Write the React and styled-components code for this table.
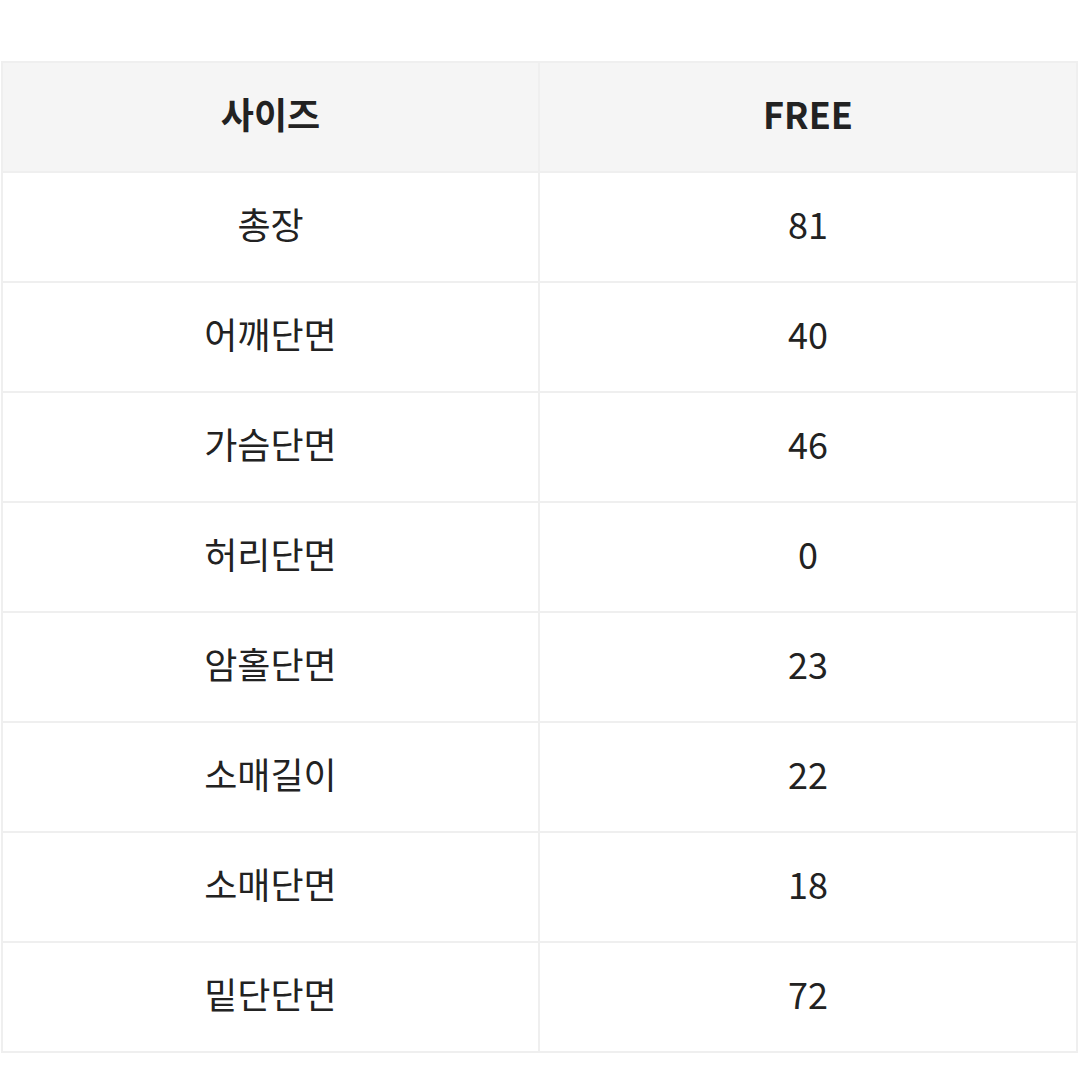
import React from "react";
import styled, { createGlobalStyle } from "styled-components";

const Global = createGlobalStyle`
  html, body { margin: 0; padding: 0; background: #fff; }
  body { font-family: "Noto Sans CJK KR", "Noto Sans", sans-serif; color: #222; }
`;

const Page = styled.div`
  width: 1079px;
  height: 1079px;
  padding-top: 61px;
  padding-left: 1px;
  box-sizing: border-box;
`;

const Table = styled.table`
  width: 1077px;
  border-collapse: collapse;
  table-layout: fixed;
  border: 2px solid #efefef;
`;

const Cell = styled.td`
  height: 110px;
  box-sizing: border-box;
  border: 2px solid #efefef;
  text-align: center;
  vertical-align: middle;
  font-size: 36px;
  line-height: 1.2;
  font-weight: ${(p) => (p.$head ? 700 : 400)};
  background: ${(p) => (p.$head ? "#f5f5f5" : "#fff")};
  color: #222;
  padding: 0 0 6px 0;
`;

const rows = [
  ["총장", "81"],
  ["어깨단면", "40"],
  ["가슴단면", "46"],
  ["허리단면", "0"],
  ["암홀단면", "23"],
  ["소매길이", "22"],
  ["소매단면", "18"],
  ["밑단단면", "72"],
];

export default function App() {
  return (
    <>
      <Global />
      <Page>
        <Table>
          <colgroup>
            <col style={{ width: "537px" }} />
            <col />
          </colgroup>
          <tbody>
            <tr>
              <Cell $head>사이즈</Cell>
              <Cell $head>FREE</Cell>
            </tr>
            {rows.map(([k, v]) => (
              <tr key={k}>
                <Cell>{k}</Cell>
                <Cell>{v}</Cell>
              </tr>
            ))}
          </tbody>
        </Table>
      </Page>
    </>
  );
}
